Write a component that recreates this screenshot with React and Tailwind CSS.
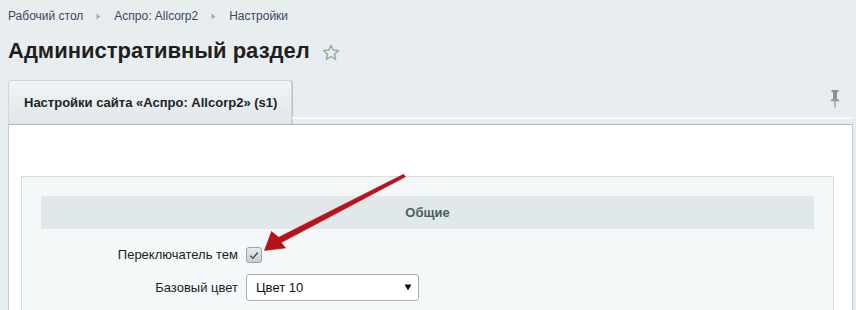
import React from 'react';

const font = { fontFamily: "'Liberation Sans', Arial, sans-serif" };

function Crumb({ children, last }) {
  return (
    <>
      <span className="text-[#3a4764] whitespace-nowrap">{children}</span>
      {!last && (
        <svg width="5" height="7" viewBox="0 0 5 7" className="mx-[13px]">
          <path d="M0.5 0.5 L4.5 3.5 L0.5 6.5 Z" fill="#a3acb3" />
        </svg>
      )}
    </>
  );
}

function Star() {
  return (
    <svg width="18" height="17" viewBox="0 0 18 17" className="ml-[12px] mt-[2px]">
      <path
        d="M9 1.2 L11.2 6.1 L16.5 6.6 L12.5 10.1 L13.7 15.4 L9 12.6 L4.3 15.4 L5.5 10.1 L1.5 6.6 L6.8 6.1 Z"
        fill="none"
        stroke="#9da8ad"
        strokeWidth="1.5"
        strokeLinejoin="round"
      />
    </svg>
  );
}

function Pin() {
  return (
    <svg width="10" height="18" viewBox="0 0 10 18">
      <rect x="1.5" y="0" width="7" height="2.2" fill="#8a9498" />
      <rect x="3" y="2" width="4" height="7.5" fill="#8a9498" />
      <path d="M1.5 9.3 H8.5 L9.5 11.3 H0.5 Z" fill="#8a9498" />
      <rect x="4.4" y="11" width="1.2" height="6.5" fill="#8a9498" />
    </svg>
  );
}

function Arrow() {
  return (
    <svg className="absolute left-0 top-0 pointer-events-none" width="856" height="310" viewBox="0 0 856 310">
      <polygon
        points="403.6,174.2 278.7,237.3 271.5,231.5 264.5,250.5 285.5,248 281.3,242.6 405.4,176.8"
        fill="#b5121c"
        stroke="#b5121c"
        strokeWidth="0.6"
        strokeLinejoin="round"
      />
    </svg>
  );
}

export default function App() {
  return (
    <div style={font} className="relative w-[856px] h-[310px] overflow-hidden bg-[#e8eef0]">
      {/* breadcrumbs */}
      <div className="h-[32px] px-[8px] flex items-center text-[12px]">
        <Crumb>Рабочий стол</Crumb>
        <Crumb>Аспро: Allcorp2</Crumb>
        <Crumb last>Настройки</Crumb>
      </div>

      {/* title */}
      <div className="h-[38px] px-[8px] flex items-center">
        <h1 className="text-[22px] font-bold text-[#1f1f1f] leading-none">Административный раздел</h1>
        <Star />
      </div>

      {/* tabs */}
      <div className="mt-[10px] ml-[8px] mr-[3px]">
        <div className="h-[45px] flex items-stretch relative border-b border-[#b2bbbf]">
          <div className="w-[284px] shrink-0 bg-gradient-to-b from-[#f1f4f5] to-[#dfe6e9] border border-b-0 border-[#cfd7da] rounded-t-[3px] flex items-center pl-[15px] text-[13px] font-bold text-[#1e2326] shadow-[1px_0_0_#b9c3c7]">
            Настройки сайта «Аспро: Allcorp2» (s1)
          </div>
          <div className="flex-1 flex flex-col">
            <div className="flex-1 flex items-center justify-end pr-[13px] pt-[1px]">
              <Pin />
            </div>
            <div className="h-[2px] bg-[#f7f9fa]" />
            <div className="h-[5px]" />
          </div>
        </div>

        {/* content */}
        <div className="bg-white border-x border-[#c3ccd0] h-[200px] pt-[51px] pl-[12px] pr-[18px]">
          <div className="border border-[#d6dee0] bg-[#f4f8f9] p-[19px] pb-0 h-[160px]">
            <div className="h-[33px] bg-[#e0e8ea] flex items-center justify-center text-[13px] font-bold text-[#4b5f66]">
              Общие
            </div>

            <div className="mt-[12px] h-[28px] flex items-center text-[13px] text-[#1e1e1e]">
              <div className="w-[197px] text-right">Переключатель тем</div>
              <div className="ml-[8px] w-[16px] h-[16px] rounded-[3px] border border-[#9aa3a8] bg-gradient-to-b from-[#e9eced] to-[#c8cdd0] flex items-center justify-center">
                <svg width="10" height="9" viewBox="0 0 10 9">
                  <path d="M1.3 4.8 L3.9 7.2 L8.8 1.6" fill="none" stroke="#4c5356" strokeWidth="1.5" />
                </svg>
              </div>
            </div>

            <div className="mt-[5px] flex items-center text-[13px] text-[#1e1e1e]">
              <div className="w-[197px] text-right">Базовый цвет</div>
              <div className="ml-[8px] w-[173px] h-[27px] rounded-[3px] border border-[#a9b0b4] bg-white flex items-center justify-between pl-[9px] pr-[6px] text-[13px] text-[#111]">
                <span>Цвет 10</span>
                <svg width="8" height="7" viewBox="0 0 8 7">
                  <path d="M0.5 0.5 H7.5 L4 6.5 Z" fill="#111" />
                </svg>
              </div>
            </div>
          </div>
        </div>
      </div>

      <Arrow />
    </div>
  );
}
